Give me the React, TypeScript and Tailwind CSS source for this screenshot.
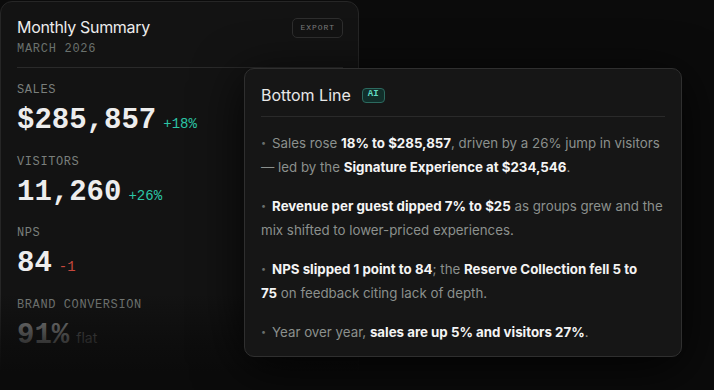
import React from 'react'

const mono = "font-['Liberation_Mono',monospace]"
const sans = "font-['Inter',sans-serif]"

type Metric = {
  label: string
  value: string
  delta: string
  tone: 'up' | 'down' | 'flat'
}

const metrics: Metric[] = [
  { label: 'SALES', value: '$285,857', delta: '+18%', tone: 'up' },
  { label: 'VISITORS', value: '11,260', delta: '+26%', tone: 'up' },
  { label: 'NPS', value: '84', delta: '-1', tone: 'down' },
  { label: 'BRAND CONVERSION', value: '91%', delta: 'flat', tone: 'flat' },
]

function Delta({ tone, children }: { tone: Metric['tone']; children: React.ReactNode }) {
  if (tone === 'up') return <span className={`${mono} text-[14px] text-[#2cc5a6]`}>{children}</span>
  if (tone === 'down') return <span className={`${mono} text-[14px] text-[#c8483d]`}>{children}</span>
  return <span className={`${sans} text-[14px] text-[#6a6a6a]`}>{children}</span>
}

function B({ children }: { children: React.ReactNode }) {
  return <strong className="font-bold text-[#f4f4f4]">{children}</strong>
}

function Bullet() {
  return <span className="mr-[6px] text-[9px] align-[2px] text-[#6a6f6c]">•</span>
}

export default function App() {
  return (
    <div className="relative h-[390px] w-[714px] overflow-hidden bg-[#0b0b0b]">
      {/* Summary card */}
      <div className="mt-px h-[430px] w-[359px] rounded-xl border border-[#262626] bg-[#131313] pl-4 pr-[15px] pt-[14px]">
        <div className="flex items-start justify-between">
          <div>
            <h2 className={`${sans} text-[16px] leading-[22px] tracking-[-0.02em] text-[#ececec]`}>Monthly Summary</h2>
            <p className={`${mono} mt-[3px] text-[12px] leading-[16px] tracking-[0.06em] text-[#6a716d]`}>MARCH 2026</p>
          </div>
          <button className={`${mono} mt-[2px] flex h-[20px] items-center rounded-[5px] border border-[#2e2e2e] px-[7px] text-[8px] tracking-[0.12em] text-[#7a7a7a]`}>
            EXPORT
          </button>
        </div>

        <div className="mt-[10px] border-t border-[#2a2a2a]" />

        <div className="mt-[14px] flex flex-col gap-[16.5px]">
          {metrics.map(m => (
            <div key={m.label}>
              <div className={`${mono} text-[12px] leading-[16px] tracking-[0.05em] text-[#7a7f7c]`}>{m.label}</div>
              <div className="mt-[6px] flex items-baseline gap-[7px]">
                <span className={`${mono} text-[29px] font-bold leading-[33px] ${m.tone === 'flat' ? 'text-[#9a9a9a]' : 'text-[#ededed]'}`}>
                  {m.value}
                </span>
                <Delta tone={m.tone}>{m.delta}</Delta>
              </div>
            </div>
          ))}
        </div>
      </div>

      {/* bottom fade */}
      <div className="pointer-events-none absolute inset-x-0 bottom-0 h-[96px] bg-[linear-gradient(to_bottom,rgba(11,11,11,0)_0%,rgba(11,11,11,0.35)_25%,rgba(11,11,11,0.7)_50%,#0b0b0b_82%)]" />

      {/* Bottom Line popover */}
      <div className="absolute left-[244px] top-[68px] h-[289px] w-[438px] rounded-[10px] border border-[#2f2f2f] bg-[#161616] px-4 pt-[14px] shadow-[0_10px_50px_rgba(0,0,0,0.85)]">
        <div className="flex items-center gap-[11px]">
          <h3 className={`${sans} text-[16px] leading-[24px] text-[#e8e8e8]`}>Bottom Line</h3>
          <span className={`${mono} flex h-[15px] items-center rounded-[4px] border border-[#2c6a5f] bg-[#112e2a] px-[5px] text-[9px] font-bold text-[#62dcc3]`}>
            AI
          </span>
        </div>
        <div className="mt-[9px] border-t border-[#2a2a2a]" />

        <div className={`${sans} mt-[14px] flex flex-col gap-[15px] text-[13.3px] leading-[24px] text-[#8b908d]`}>
          <p>
            <Bullet />Sales rose <B>18% to $285,857</B>, driven by a 26% jump in visitors — led by the{' '}
            <B>Signature Experience at $234,546</B>.
          </p>
          <p>
            <Bullet /><B>Revenue per guest dipped 7% to $25</B> as groups grew and the mix shifted to lower-priced
            experiences.
          </p>
          <p>
            <Bullet /><B>NPS slipped 1 point to 84</B>; the <B>Reserve Collection fell 5 to 75</B>&nbsp;on feedback
            citing lack of depth.
          </p>
          <p>
            <Bullet />Year over year, <B>sales are up 5% and visitors 27%</B>.
          </p>
        </div>
      </div>
    </div>
  )
}
